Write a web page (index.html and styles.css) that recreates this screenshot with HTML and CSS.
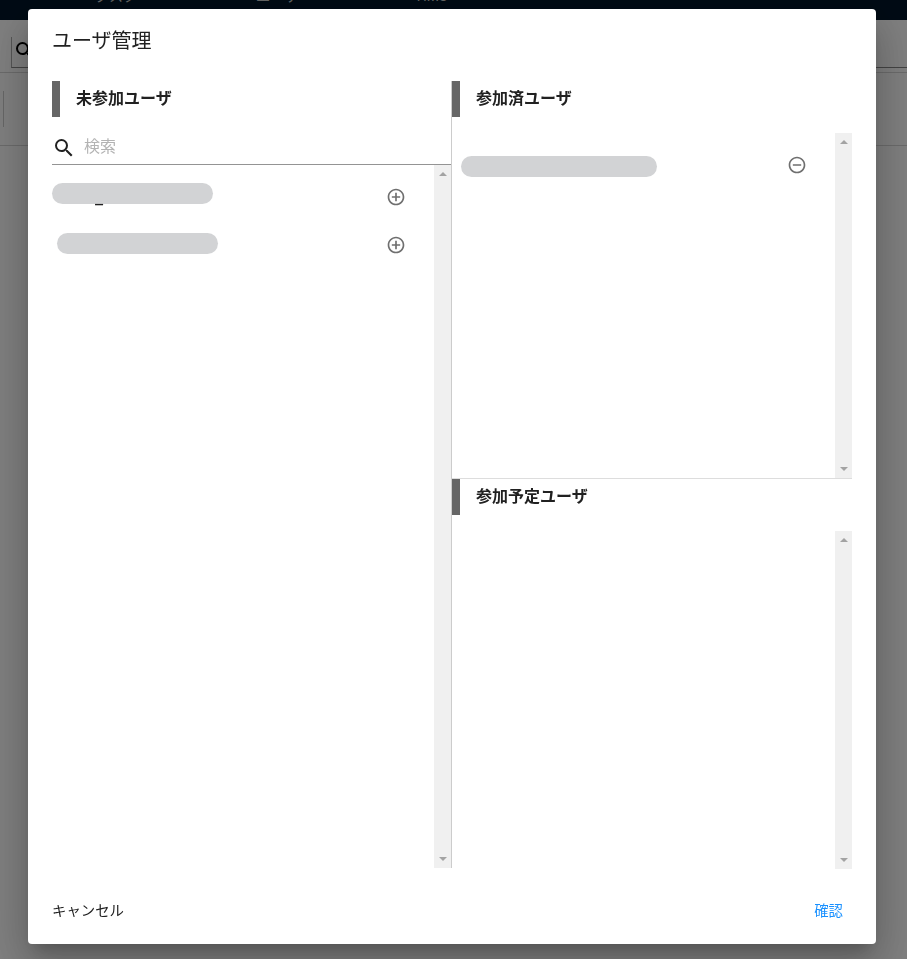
FILE: index.html
```html
<!DOCTYPE html>
<html lang="ja">
<head>
  <meta charset="utf-8" />
  <title>ユーザ管理</title>
  <link rel="stylesheet" href="styles.css">
</head>
<body>

  <header class="topbar">
    <span>タスク</span>
    <span>ユーザ</span>
    <span>HMS</span>
  </header>

  <div class="page">
    <div class="page-tools">
      <div class="page-search">
        <svg viewBox="0 0 24 24" width="24" height="24"><path d="M15.5 14h-.79l-.28-.27A6.47 6.47 0 0 0 16 9.5 6.5 6.5 0 1 0 9.5 16c1.61 0 3.09-.59 4.23-1.57l.27.28v.79l5 4.99L20.49 19l-4.99-5zm-6 0C7.01 14 5 11.99 5 9.5S7.01 5 9.5 5 14 7.01 14 9.5 11.99 14 9.5 14z"/></svg>
      </div>
    </div>
    <div class="page-row"><i></i></div>
  </div>

  <div class="backdrop"></div>

  <div class="wrap">
    <div class="dialog">
      <h2 class="title">ユーザ管理</h2>

      <div class="columns">
        <section class="col col-left">
          <h3 class="heading">未参加ユーザ</h3>
          <label class="search">
            <svg viewBox="0 0 24 24" width="24" height="24"><path d="M15.5 14h-.79l-.28-.27A6.47 6.47 0 0 0 16 9.5 6.5 6.5 0 1 0 9.5 16c1.61 0 3.09-.59 4.23-1.57l.27.28v.79l5 4.99L20.49 19l-4.99-5zm-6 0C7.01 14 5 11.99 5 9.5S7.01 5 9.5 5 14 7.01 14 9.5 11.99 14 9.5 14z"/></svg>
            <input type="text" placeholder="検索" />
          </label>
          <div class="list list-left">
            <div class="list-body">
              <div class="user user-first">
                <span class="mask"></span>
                <span class="stray">_</span>
                <svg class="action" viewBox="0 0 24 24" width="20" height="20"><path d="M13 7h-2v4H7v2h4v4h2v-4h4v-2h-4V7zm-1-5C6.48 2 2 6.48 2 12s4.48 10 10 10 10-4.48 10-10S17.52 2 12 2zm0 18c-4.41 0-8-3.59-8-8s3.59-8 8-8 8 3.59 8 8-3.59 8-8 8z"/></svg>
              </div>
              <div class="user user-second">
                <span class="mask"></span>
                <svg class="action" viewBox="0 0 24 24" width="20" height="20"><path d="M13 7h-2v4H7v2h4v4h2v-4h4v-2h-4V7zm-1-5C6.48 2 2 6.48 2 12s4.48 10 10 10 10-4.48 10-10S17.52 2 12 2zm0 18c-4.41 0-8-3.59-8-8s3.59-8 8-8 8 3.59 8 8-3.59 8-8 8z"/></svg>
              </div>
            </div>
            <div class="scrollbar"><b class="up"></b><b class="down"></b></div>
          </div>
        </section>

        <section class="col col-right">
          <div class="joined">
            <h3 class="heading">参加済ユーザ</h3>
            <div class="list list-joined">
              <div class="list-body">
                <div class="user user-joined">
                  <span class="mask mask-wide"></span>
                  <svg class="action" viewBox="0 0 24 24" width="20" height="20"><path d="M7 11v2h10v-2H7zm5-9C6.48 2 2 6.48 2 12s4.48 10 10 10 10-4.48 10-10S17.52 2 12 2zm0 18c-4.41 0-8-3.59-8-8s3.59-8 8-8 8 3.59 8 8-3.59 8-8 8z"/></svg>
                </div>
              </div>
              <div class="scrollbar"><b class="up"></b><b class="down"></b></div>
            </div>
          </div>
          <div class="planned">
            <h3 class="heading">参加予定ユーザ</h3>
            <div class="list list-planned">
              <div class="list-body"></div>
              <div class="scrollbar"><b class="up"></b><b class="down"></b></div>
            </div>
          </div>
        </section>
      </div>

      <div class="actions">
        <button class="btn">キャンセル</button>
        <button class="btn btn-primary">確認</button>
      </div>
    </div>
  </div>

</body>
</html>
```

FILE: styles.css
```css
* {
  box-sizing: border-box;
}
html, body {
  height: 100%;
}
body {
  margin: 0;
  overflow: hidden;
  font-family: Roboto, "Noto Sans CJK JP", sans-serif;
  color: #212121;
  background: #fff;
}
h2, h3 {
  margin: 0;
}
button {
  border: none;
  background: none;
  padding: 0;
  font: inherit;
  color: inherit;
}

/* page behind the dialog */
.topbar {
  display: flex;
  height: 20px;
  padding-left: 95px;
  gap: 119px;
  overflow: hidden;
  background: #001529;
  color: #ccc;
  font-size: 14px;
  line-height: 6px;
}
.topbar span {
  margin-top: -7px;
}
.page-tools {
  height: 53px;
  padding: 17px 0 0 11px;
  border-bottom: 1px solid #d6d6d6;
}
.page-search {
  height: 31px;
  padding: 2px 0 0 1px;
  border-left: 1px solid #aaa;
  border-bottom: 1px solid #888;
}
.page-row {
  height: 73px;
  padding-top: 18px;
  border-bottom: 1px solid #d6d6d6;
}
.page-row i {
  display: block;
  width: 1px;
  height: 36px;
  margin-left: 3px;
  background: #ccc;
}
.backdrop {
  position: fixed;
  top: 0;
  right: 0;
  bottom: 0;
  left: 0;
  background: rgba(0, 0, 0, .5);
}

/* dialog */
.wrap {
  position: fixed;
  top: 9px;
  left: 28px;
}
.dialog {
  display: flex;
  flex-direction: column;
  width: 848px;
  height: 935px;
  padding: 0 24px;
  border-radius: 4px;
  background: #fff;
  box-shadow: 0 11px 15px -7px rgba(0, 0, 0, .2), 0 24px 38px 3px rgba(0, 0, 0, .14), 0 9px 46px 8px rgba(0, 0, 0, .12);
}
.title {
  height: 72px;
  padding-top: 17px;
  font-size: 20px;
  line-height: 30px;
  font-weight: 400;
}
.columns {
  display: flex;
  height: 787px;
}
.col {
  width: 400px;
}
.col-left {
  border-right: 1px solid #ccc;
}
.heading {
  height: 36px;
  padding-left: 16px;
  border-left: 8px solid #666;
  font-size: 16px;
  line-height: 36px;
  font-weight: 700;
}
.search {
  display: flex;
  align-items: center;
  height: 48px;
  border-bottom: 1px solid #949494;
}
.search svg {
  flex: none;
  margin: 14px 8px 0 0;
  fill: #212121;
}
.search input {
  flex: 1;
  min-width: 0;
  margin-top: 12px;
  border: none;
  outline: none;
  padding: 0;
  font: 16px Roboto, "Noto Sans CJK JP", sans-serif;
  color: #212121;
}
.search input::placeholder {
  color: #b3b3b3;
}
.list {
  display: flex;
}
.list-left {
  height: 703px;
}
.list-joined {
  height: 345px;
  margin-top: 16px;
}
.list-planned {
  height: 338px;
  margin-top: 16px;
}
.list-body {
  flex: 1;
  min-width: 0;
}
.scrollbar {
  display: flex;
  flex: none;
  flex-direction: column;
  justify-content: space-between;
  align-items: center;
  width: 17px;
  padding: 7px 0;
  background: #f0f0f0;
}
.up, .down {
  display: block;
  width: 0;
  height: 0;
  border-left: 4px solid transparent;
  border-right: 4px solid transparent;
}
.up {
  border-bottom: 4px solid #a3a3a3;
}
.down {
  border-top: 4px solid #a3a3a3;
}
.user {
  position: relative;
  display: flex;
  justify-content: space-between;
  height: 48px;
}
.user-first {
  padding: 18px 28px 0 0;
}
.user-second {
  padding: 20px 28px 0 5px;
}
.user-joined {
  padding: 23px 28px 0 9px;
  height: 60px;
}
.mask {
  width: 161px;
  height: 21px;
  border-radius: 11px;
  background: #d2d3d5;
}
.mask-wide {
  width: 196px;
}
.stray {
  position: absolute;
  top: 23px;
  left: 43px;
  font-size: 18px;
  line-height: 20px;
  color: #212121;
}
.action {
  flex: none;
  fill: #6f6f6f;
}
.user-first .action {
  margin-top: 4px;
}
.user-second .action {
  margin-top: 2px;
}
.user-joined .action {
  margin-top: -1px;
}
.joined {
  height: 398px;
  border-bottom: 1px solid #ddd;
}
.planned {
  height: 389px;
}

/* footer */
.actions {
  display: flex;
  justify-content: space-between;
  padding: 32px 9px 0 0;
}
.btn {
  font-size: 14.4px;
  line-height: 24px;
  cursor: pointer;
}
.btn-primary {
  color: #1890ff;
}
```
